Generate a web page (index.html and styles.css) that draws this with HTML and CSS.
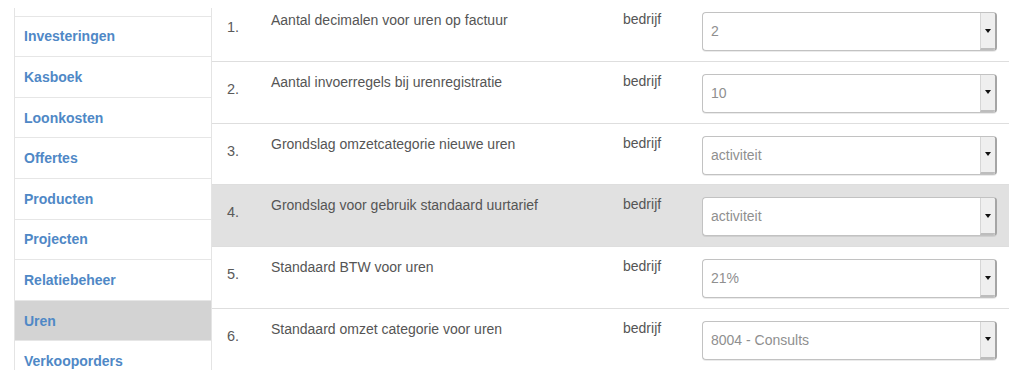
FILE: index.html
```html
<!DOCTYPE html>
<html lang="nl">
<head>
<meta charset="utf-8">
<title>Instellingen uren</title>
<link rel="stylesheet" href="styles.css">
</head>
<body>
<div class="page">
  <div class="frame">
    <nav class="sidebar">
      <ul class="menu">
        <li class="menu-item"><a href="#">Investeringen</a></li>
        <li class="menu-item"><a href="#">Kasboek</a></li>
        <li class="menu-item"><a href="#">Loonkosten</a></li>
        <li class="menu-item"><a href="#">Offertes</a></li>
        <li class="menu-item"><a href="#">Producten</a></li>
        <li class="menu-item"><a href="#">Projecten</a></li>
        <li class="menu-item"><a href="#">Relatiebeheer</a></li>
        <li class="menu-item active"><a href="#">Uren</a></li>
        <li class="menu-item"><a href="#">Verkooporders</a></li>
      </ul>
    </nav>
    <div class="settings">
      <div class="row">
        <div class="num">1.</div>
        <div class="label">Aantal decimalen voor uren op factuur</div>
        <div class="scope">bedrijf</div>
        <div class="select"><span class="value">2</span><span class="arrow"></span></div>
      </div>
      <div class="row">
        <div class="num">2.</div>
        <div class="label">Aantal invoerregels bij urenregistratie</div>
        <div class="scope">bedrijf</div>
        <div class="select"><span class="value">10</span><span class="arrow"></span></div>
      </div>
      <div class="row">
        <div class="num">3.</div>
        <div class="label">Grondslag omzetcategorie nieuwe uren</div>
        <div class="scope">bedrijf</div>
        <div class="select"><span class="value">activiteit</span><span class="arrow"></span></div>
      </div>
      <div class="row hover">
        <div class="num">4.</div>
        <div class="label">Grondslag voor gebruik standaard uurtarief</div>
        <div class="scope">bedrijf</div>
        <div class="select"><span class="value">activiteit</span><span class="arrow"></span></div>
      </div>
      <div class="row">
        <div class="num">5.</div>
        <div class="label">Standaard BTW voor uren</div>
        <div class="scope">bedrijf</div>
        <div class="select"><span class="value">21%</span><span class="arrow"></span></div>
      </div>
      <div class="row">
        <div class="num">6.</div>
        <div class="label">Standaard omzet categorie voor uren</div>
        <div class="scope">bedrijf</div>
        <div class="select"><span class="value">8004 - Consults</span><span class="arrow"></span></div>
      </div>
    </div>
  </div>
</div>
</body>
</html>
```
FILE: styles.css
```css
* { box-sizing: border-box; }
html, body { margin: 0; padding: 0; background: #fff; }
body { font-family: "Liberation Sans", Arial, Helvetica, sans-serif; font-size: 14px; color: #555; }

.page { padding-top: 8px; }
.frame {
  display: flex;
  height: 362px;
  overflow: hidden;
}

.sidebar {
  margin-left: 14px;
  width: 198px;
  flex: none;
  border-left: 1px solid #e4e4e4;
  border-right: 1px solid #e4e4e4;
}
.menu { list-style: none; margin: 0; padding: 7.6px 0 0; }
.menu-item {
  height: 40.6px;
  border-top: 1px solid #e6e6e6;
  display: flex;
  align-items: center;
  padding-left: 9px;
}
.menu-item a {
  color: #4f88c6;
  font-weight: bold;
  text-decoration: none;
  font-size: 14px;
}
.menu-item.active { background: #d3d3d3; }

.settings {
  width: 797px;
  flex: none;
  margin-top: -8px;
  align-self: flex-start;
}
.row {
  display: grid;
  grid-template-columns: 59px 352px 79px 295px;
  align-items: start;
  height: 61.8px;
  border-bottom: 1px solid #dedede;
}
.row.hover { background: #e1e1e1; }
.num {
  padding-left: 15px;
  padding-top: 17px;
  line-height: 20px;
  font-size: 14.5px;
  color: #5a5a5a;
}
.label {
  padding-top: 10px;
  line-height: 20px;
  color: #555;
}
.scope {
  padding-top: 9px;
  line-height: 20px;
  color: #555;
}
.select {
  margin-top: 12px;
  height: 39px;
  display: flex;
  background: #fff;
  border: 1px solid #c2c2c2;
  border-right: 2px solid #a5a5a5;
  border-radius: 4px;
  box-shadow: 0 1px 0 rgba(0,0,0,0.08);
  overflow: hidden;
}
.value {
  flex: 1;
  padding-left: 8px;
  line-height: 37px;
  color: #8f8f8f;
}
.arrow {
  width: 15px;
  flex: none;
  background: #efefef;
  border-left: 1px solid #d6d6d6;
  border-bottom: 2px solid #bdbdbd;
  display: flex;
  align-items: center;
  justify-content: center;
}
.arrow::after {
  content: "";
  width: 0;
  height: 0;
  border-left: 3.5px solid transparent;
  border-right: 3.5px solid transparent;
  border-top: 4px solid #111;
}
```
